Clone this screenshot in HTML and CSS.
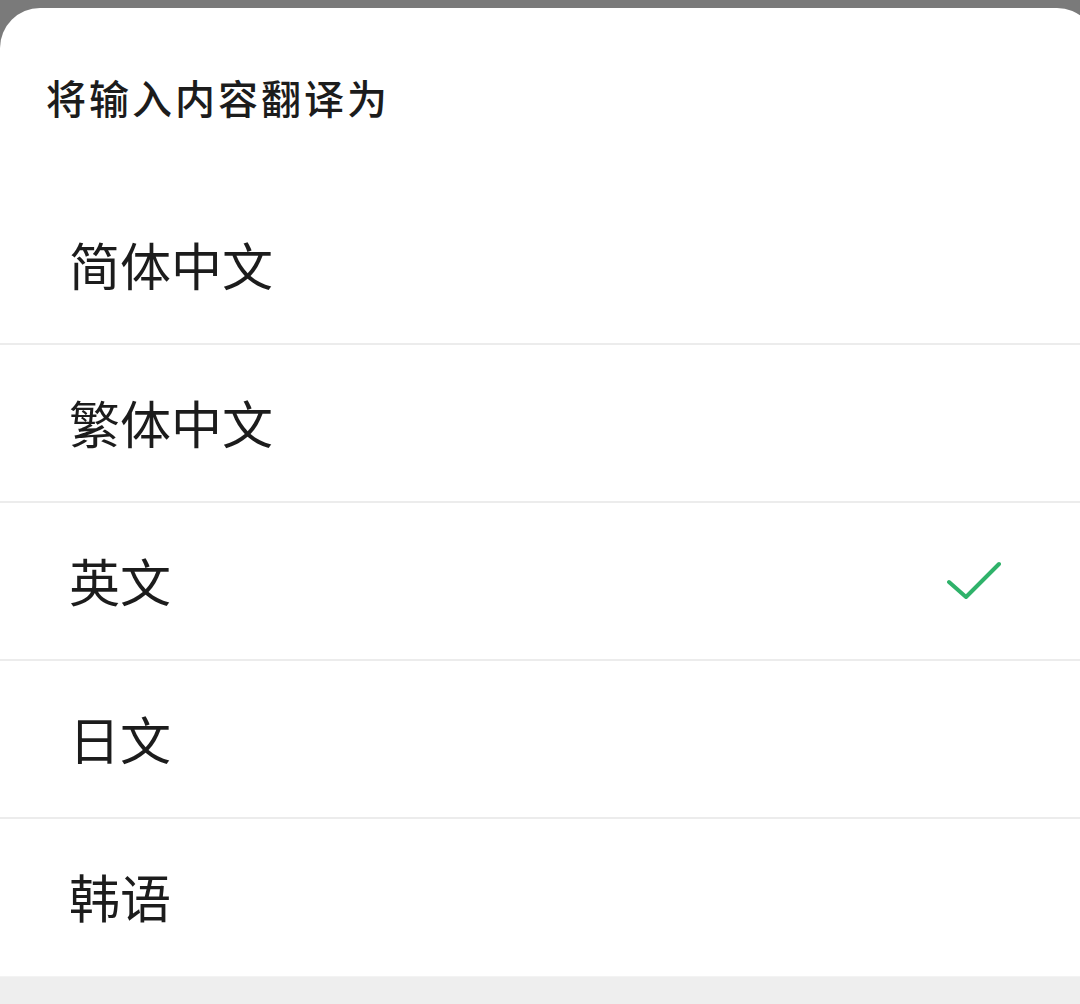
FILE: index.html
```html
<!DOCTYPE html>
<html lang="zh-CN">
<head>
<meta charset="utf-8">
<link rel="stylesheet" href="styles.css">
</head>
<body>
<div class="sheet">
  <div class="header"><h1 class="title">将输入内容翻译为</h1></div>
  <ul class="list">
    <li class="row"><span class="label">简体中文</span></li>
    <li class="row"><span class="label">繁体中文</span></li>
    <li class="row"><span class="label">英文</span>
      <svg class="check" width="60" height="44" viewBox="0 0 60 44"><polyline points="8,23 25,38 58,5" fill="none" stroke="#2fb26a" stroke-width="4" stroke-linecap="round" stroke-linejoin="round"/></svg>
    </li>
    <li class="row"><span class="label">日文</span></li>
    <li class="row last"><span class="label">韩语</span></li>
  </ul>
  <div class="footer"></div>
</div>
</body>
</html>
```
FILE: styles.css
```css
html, body {
  margin: 0;
  padding: 0;
  height: 100%;
  overflow: hidden;
  background: #7a7a7a;
}
body {
  font-family: "Noto Sans CJK SC", "Noto Sans", sans-serif;
  color: #1c1c1c;
}
.sheet {
  margin-top: 8px;
  width: 1097px;
  background: #ffffff;
  border-radius: 40px 40px 0 0;
  min-height: 996px;
}
.header {
  height: 179px;
  display: flex;
  align-items: center;
  padding-left: 46px;
}
.title {
  margin: 0;
  margin-top: -2px;
  font-size: 40px;
  font-weight: 500;
  letter-spacing: 3px;
  line-height: 1;
}
.list {
  list-style: none;
  margin: 0;
  padding: 0;
  width: 1080px;
}
.row {
  height: 156px;
  border-bottom: 2px solid #ececec;
  display: flex;
  align-items: center;
  justify-content: space-between;
  padding-left: 69px;
  padding-right: 79px;
}
.row.last {
  height: 157px;
  border-bottom: none;
}
.label {
  font-size: 51px;
  line-height: 1;
  font-weight: 400;
  margin-top: -2px;
}
.check {
  display: block;
}
.footer {
  height: 29px;
  width: 1080px;
  background: #eeeeee;
  border-top: 1px solid #f3f3f3;
}
```
